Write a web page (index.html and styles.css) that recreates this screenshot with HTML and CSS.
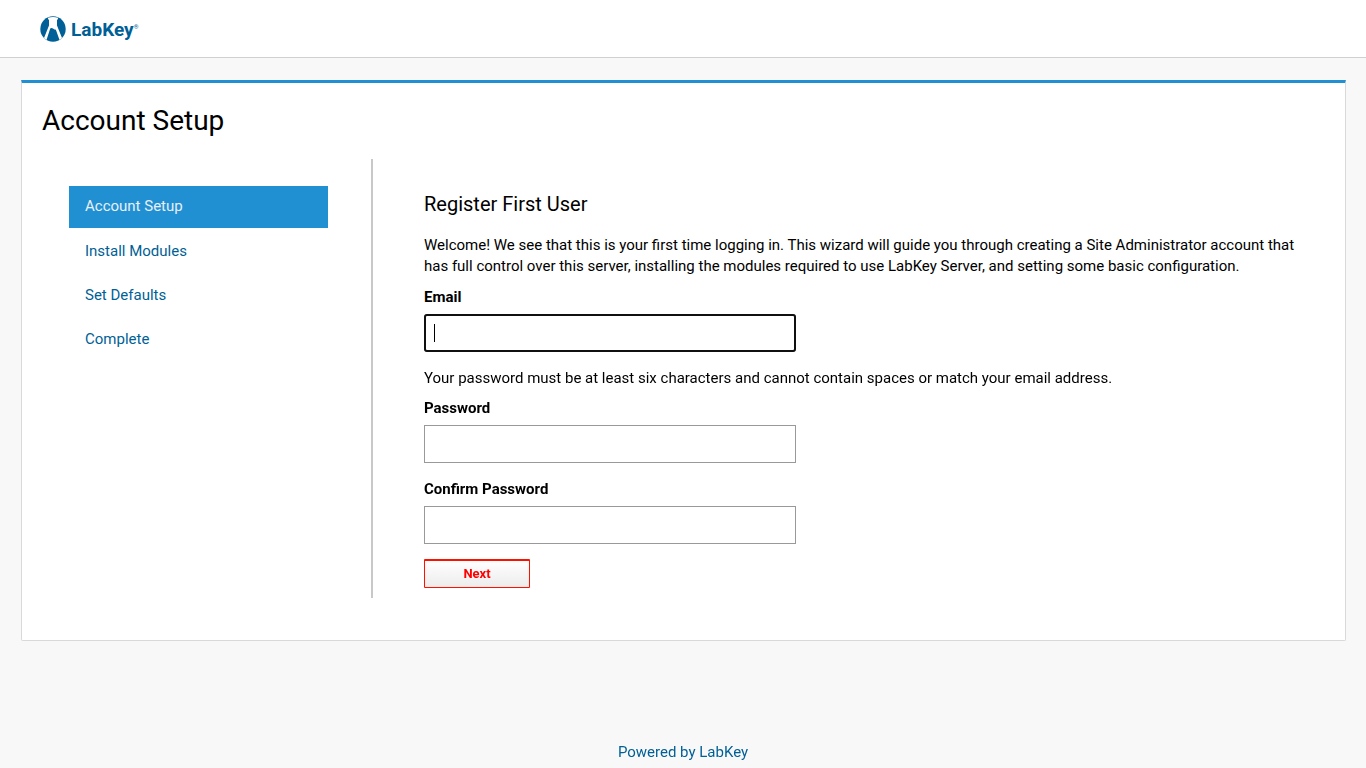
FILE: index.html
```html
<!DOCTYPE html>
<html lang="en">
<head>
<meta charset="utf-8">
<title>Account Setup</title>
<link rel="stylesheet" href="styles.css">
</head>
<body>
<header class="site-header">
  <a class="brand" href="#" aria-label="LabKey home">
    <svg class="brand-mark" viewBox="0 0 26 26" aria-hidden="true">
      <circle cx="13" cy="13" r="12.7" fill="#005f96"/>
      <path d="M8 1.800Q13 0 18 1.800V3.500H17V9.500L22 22L19.500 24L15.800 13.500Q14.500 14 13 12.500Q11.500 11.300 10.200 12.500L6.500 24L4 22L9 9.500V3.500H8Z" fill="#fff"/>
    </svg>
    <span class="brand-name">LabKey</span><span class="brand-reg">®</span>
  </a>
</header>
<main class="panel">
  <h1 class="panel-title">Account Setup</h1>
  <div class="wizard">
    <nav class="steps" aria-label="Setup steps">
      <a class="step step-active" href="#">Account Setup</a>
      <a class="step" href="#">Install Modules</a>
      <a class="step" href="#">Set Defaults</a>
      <a class="step" href="#">Complete</a>
    </nav>
    <form class="register">
      <h2 class="register-title">Register First User</h2>
      <p class="intro">Welcome! We see that this is your first time logging in. This wizard will guide you through creating a Site Administrator account that has full control over this server, installing the modules required to use LabKey Server, and setting some basic configuration.</p>
      <label class="label" for="email">Email</label>
      <input class="field" id="email" type="text" autofocus>
      <p class="hint">Your password must be at least six characters and cannot contain spaces or match your email address.</p>
      <label class="label" for="password">Password</label>
      <input class="field" id="password" type="password">
      <label class="label" for="confirm">Confirm Password</label>
      <input class="field" id="confirm" type="password">
      <button class="next" type="submit">Next</button>
    </form>
  </div>
</main>
<footer class="footer"><a class="footer-link" href="#">Powered by LabKey</a></footer>
</body>
</html>
```
FILE: styles.css
```css
* { box-sizing: border-box; }
body {
  margin: 0;
  min-height: 100vh;
  display: flex;
  flex-direction: column;
  background: #f8f8f8;
  color: #000;
  font: 15px/21px Roboto, "Liberation Sans", sans-serif;
}
.site-header {
  display: flex;
  align-items: center;
  padding: 15px 40px;
  background: #fff;
  border-bottom: 1px solid #d0d0d0;
}
.brand {
  display: flex;
  align-items: center;
  height: 27px;
  color: #005f96;
  text-decoration: none;
}
.brand-mark { width: 26px; height: 26px; margin-right: 5px; }
.brand-name { padding-top: 2px; font-size: 19px; font-weight: 700; }
.brand-reg { font-size: 6px; line-height: 8px; margin-bottom: 4px; }
.panel {
  margin: 22px 20px 0 21px;
  padding: 21px 20px 42px;
  background: #fff;
  border: 1px solid #d9d9d9;
  border-top: 3px solid #2190d3;
  border-radius: 0 0 2px 2px;
}
.panel-title {
  margin: 0 0 21px;
  font-size: 28px;
  line-height: 34px;
  font-weight: 400;
}
.wizard { display: flex; }
.steps {
  flex: 0 0 331px;
  display: flex;
  flex-direction: column;
  gap: 2px;
  padding: 27px 43px 0 27px;
  border-right: 2px solid #c8c8c8;
}
.step {
  padding: 11px 16px 10px;
  color: #005f96;
  text-decoration: none;
}
.step-active {
  padding: 10px 16px 11px;
  background: #2190d3;
  color: #e8eff5;
}
.register {
  flex: 1;
  padding: 32px 24px 10px 51px;
}
.register-title {
  margin: 0 0 17px;
  font-size: 20px;
  line-height: 27px;
  font-weight: 400;
}
.intro { margin: 0 0 10px; }
.hint { margin: 0 0 9px; }
.label {
  display: block;
  margin-bottom: 6px;
  font-weight: 700;
}
.field {
  display: block;
  width: 372px;
  max-width: 100%;
  height: 38px;
  margin-bottom: 16px;
  padding: 0 9px;
  border: 1px solid #999;
  background: #fff;
  font: 15px/21px Roboto, sans-serif;
}
#confirm { margin-bottom: 15px; }
.field:focus {
  outline: 2px solid #101010;
  outline-offset: -2px;
  border-radius: 3px;
  caret-color: transparent;
  background: linear-gradient(#000, #000) 9px center / 1px 18px no-repeat #fff;
}
.next {
  display: block;
  width: 106px;
  height: 29px;
  padding: 0;
  border: 1px solid #f10;
  border-top-width: 2px;
  border-radius: 1px;
  background: linear-gradient(#fff, #ececec);
  color: #f00;
  font: 700 13px/20px Roboto, sans-serif;
}
.footer {
  margin-top: auto;
  padding: 20px 0 5px;
  text-align: center;
}
.footer-link { color: #005f96; text-decoration: none; }
```
